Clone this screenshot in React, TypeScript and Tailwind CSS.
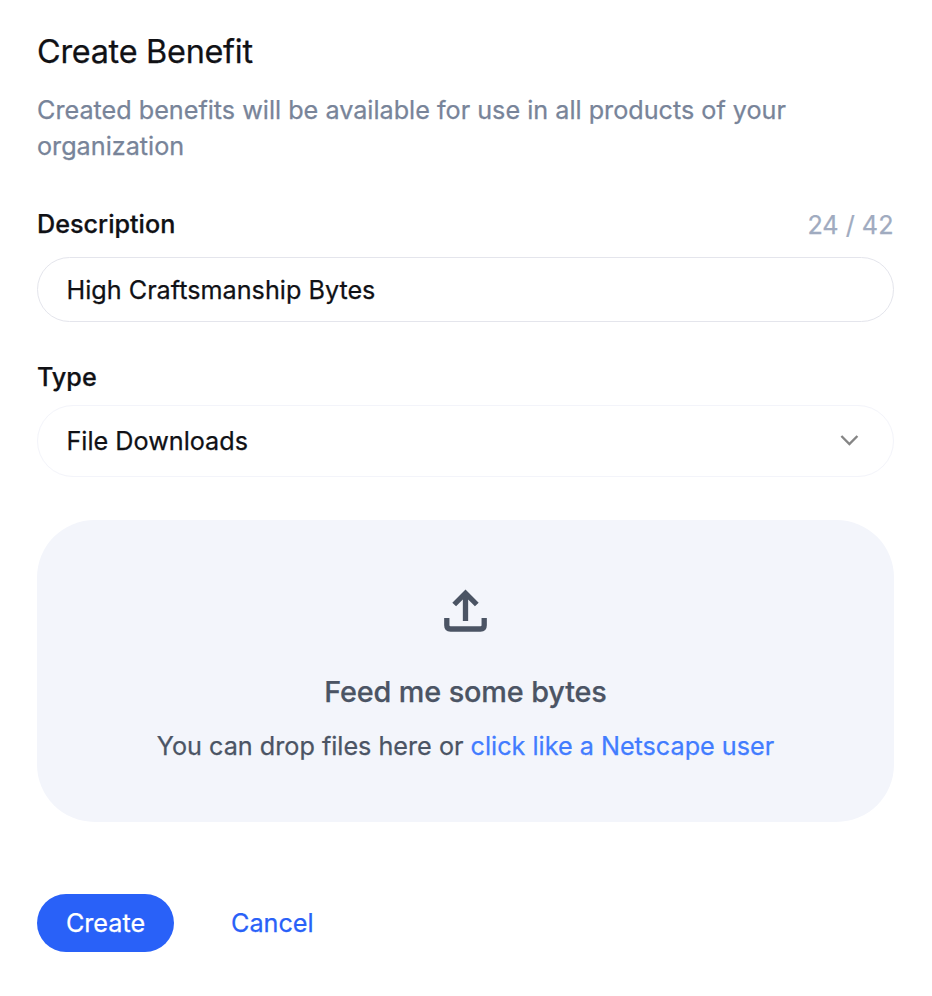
import React from "react";

export default function App() {
  return (
    <main className="flex min-h-[996px] w-[932px] flex-col bg-white px-[37px] pt-[28px] font-['Inter',sans-serif] text-[25.2px] leading-[36px] text-[#101115] [-webkit-text-stroke:0.25px]">
      <h1 className="text-[32.4px] leading-[48px] tracking-[-0.27px]">Create Benefit</h1>
      <p className="mt-[16px] text-[#788499]">
        Created benefits will be available for use in all products of your organization
      </p>
      <div className="mt-[42px] flex h-[36px] w-[856.5px] items-center justify-between">
        <label htmlFor="description" className="font-medium">Description</label>
        <span className="pt-[2px] text-[#a0abc0]">24 / 42</span>
      </div>
      <input id="description" defaultValue="High Craftsmanship Bytes" className="mt-[15px] h-[65px] w-[857px] rounded-full border border-[#e4e5ec] px-[28.5px] outline-none" />
      <span className="mt-[37px] font-medium">Type</span>
      <button className="mt-[10px] flex h-[72px] w-[857px] items-center justify-between rounded-full border border-[#f3f4fa] pr-[34px] pl-[28.5px]">
        File Downloads
        <svg className="mb-[2px]" width="20" height="12" viewBox="0 0 20 12" fill="none" stroke="#858585" strokeWidth="2.4">
          <path d="M2.4 2l8 8 8-8" />
        </svg>
      </button>
      <section className="mt-[43px] flex h-[302px] w-[857px] flex-col items-center rounded-[57.6px] bg-[#f3f5fb] pt-[69px] text-[#4b5464]">
        <svg width="43" height="44" viewBox="0 0 43 44" fill="none" stroke="currentColor" strokeWidth="5.3">
          <path d="M2.8 29v7.3q0 3.7 3.7 3.7h30q3.7 0 3.7-3.7V29M21.5 32V5M10.2 15.5L21.5 4.2l11.3 11.3" />
        </svg>
        <h2 className="mt-[41px] text-[28.8px] leading-[36px] font-medium tracking-[-0.12px]">Feed me some bytes</h2>
        <p className="mt-[18px]">You can drop files here or <a className="text-[#427cff]">click like a Netscape user</a></p>
      </section>
      <div className="mt-[72px] flex h-[58px] items-center">
        <button className="h-[58px] w-[137px] rounded-full bg-[#2961f8] text-white">Create</button>
        <button className="ml-[57px] text-[#2961f8]">Cancel</button>
      </div>
    </main>
  );
}
